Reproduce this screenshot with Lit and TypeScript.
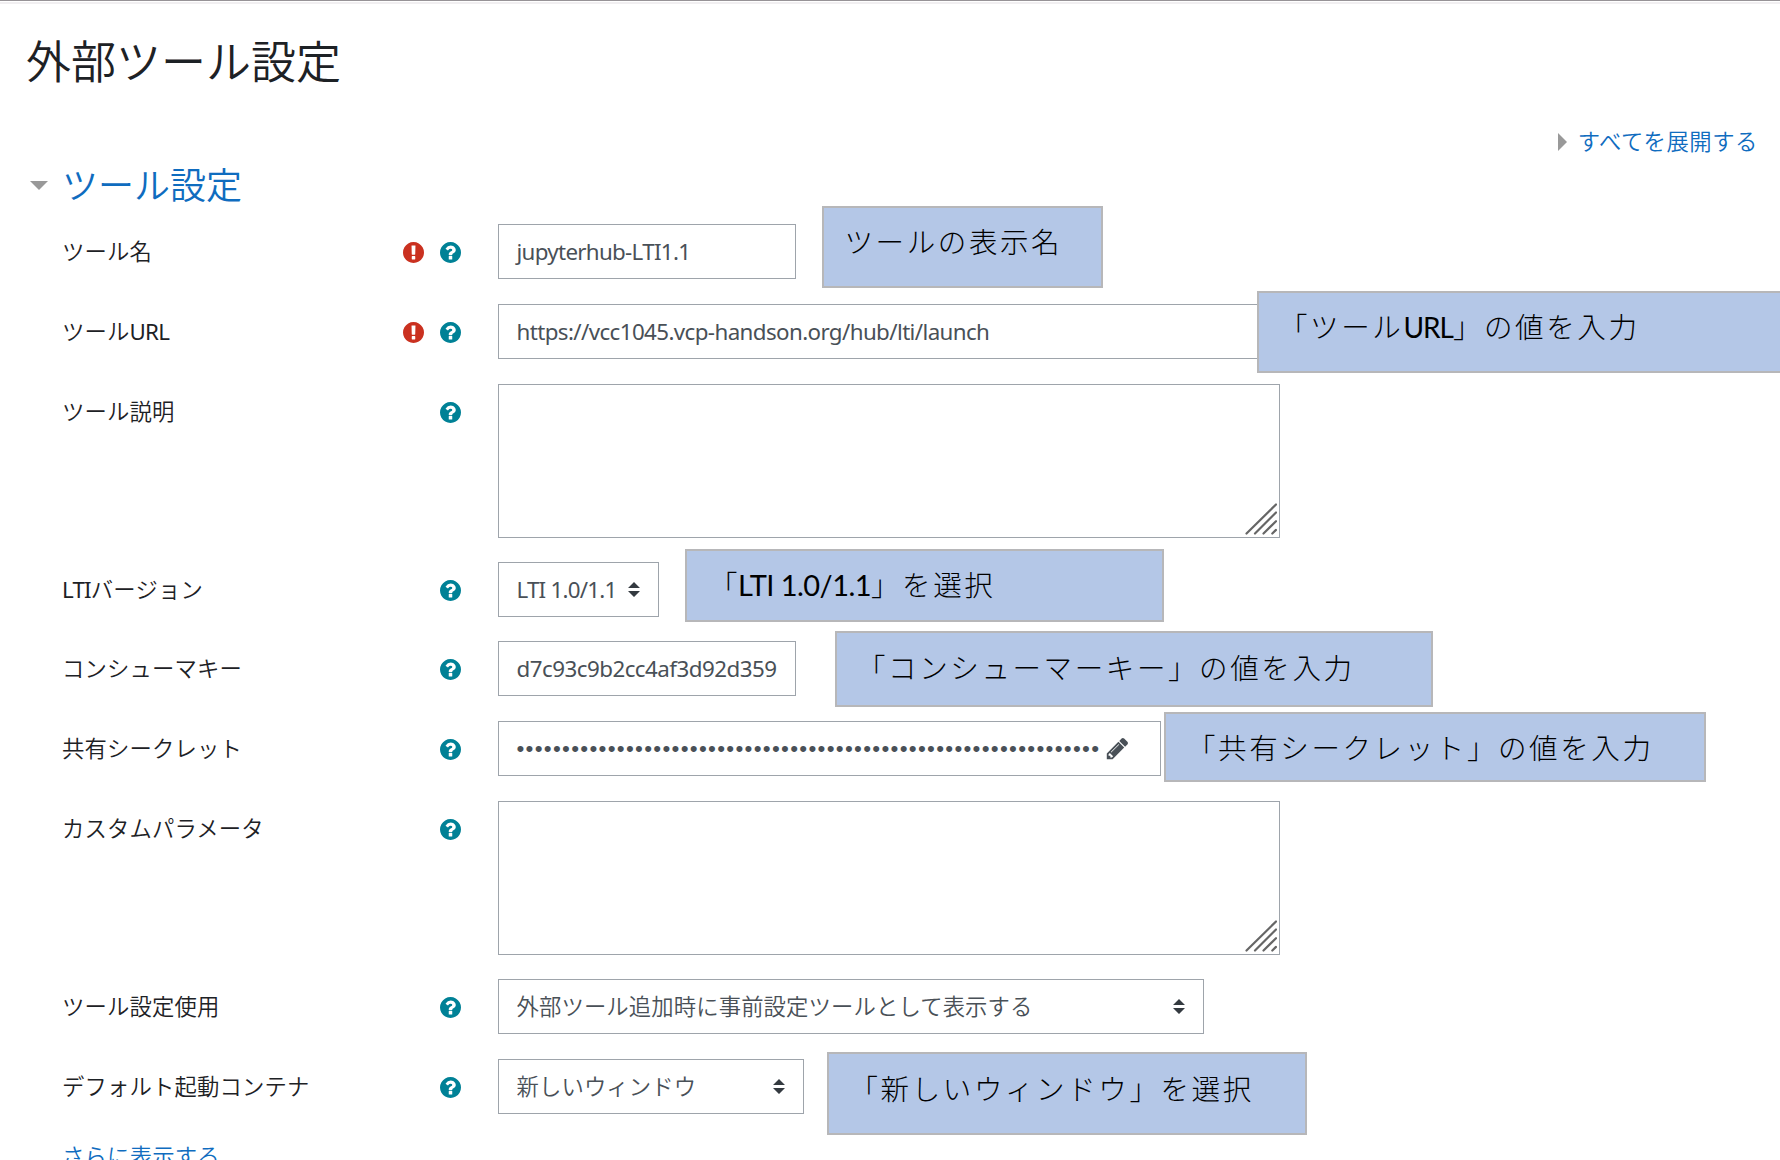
import { LitElement, html, css, svg, nothing } from "lit";
import { customElement, property } from "lit/decorators.js";

const HELP =
  "M896 1248v-192q0-14-9-23t-23-9h-192q-14 0-23 9t-9 23v192q0 14 9 23t23 9h192q14 0 23-9t9-23zm256-672q0-88-55.5-163t-138.5-116-170-41q-243 0-371 213-15 24 8 42l132 100q7 6 19 6 16 0 25-12 53-68 86-92 34-24 86-24 48 0 85.5 26t37.5 59q0 38-20 61t-68 45q-63 28-115.5 86.5t-52.5 125.5v36q0 14 9 23t23 9h192q14 0 23-9t9-23q0-19 21.5-49.5t54.5-49.5q32-18 49-28.5t46-35 44.5-48 28-60.5 12.5-81zm384 192q0 209-103 385.5t-279.5 279.5-385.5 103-385.5-103-279.5-279.5-103-385.5 103-385.5 279.5-279.5 385.5-103 385.5 103 279.5 279.5 103 385.5z";
const REQUIRED =
  "M768 0q209 0 385.5 103t279.5 279.5 103 385.5-103 385.5-279.5 279.5-385.5 103-385.5-103-279.5-279.5-103-385.5 103-385.5 279.5-279.5 385.5-103zm128 1247v-190q0-14-9-23.5t-22-9.5h-192q-13 0-23 10t-10 23v190q0 13 10 23t23 10h192q13 0 22-9.5t9-23.5zm-2-344l18-621q0-12-10-18-10-8-24-8h-220q-14 0-24 8-10 6-10 18l17 621q0 10 10 17.5t24 7.5h185q14 0 23.5-7.5t10.5-17.5z";
const PENCIL =
  "M491 1536l91-91-235-235-91 91v107h128v128h107zm523-928q0-22-22-22-10 0-17 7l-542 542q-7 7-7 17 0 22 22 22 10 0 17-7l542-542q7-7 7-17zm-54-192l416 416-832 832h-416v-416zm683 96q0 53-37 90l-166 166-416-416 166-165q36-38 90-38 53 0 91 38l235 234q37 39 37 91z";

/** One labelled line of the form; the control is slotted. */
@customElement("form-row")
export class FormRow extends LitElement {
  @property() label = "";
  @property({ type: Boolean }) required = false;

  static styles = css`
    :host { display: flex; align-items: flex-start; }
    .head { display: flex; align-items: center; width: 399px; height: 55px; flex: none; }
    .label { flex: 1; white-space: nowrap; color: #1d2125; letter-spacing: 0.16px; }
    .latin { font-weight: 400; letter-spacing: -0.8px; }
    .icons { display: flex; gap: 16px; padding-top: 2px; }
    .icon { display: block; width: 21px; height: 21px; }
    .help { fill: #008196; }
    .req { fill: #ca3120; }
    .body { padding-left: 37px; }
  `;

  render() {
    const parts = this.label.split(/([A-Z]+)/).filter(Boolean);
    return html`
      <div class="head">
        <span class="label">${parts.map((p) => (/[A-Z]/.test(p) ? html`<span class="latin">${p}</span>` : p))}</span>
        <span class="icons">
          ${this.required
            ? html`<svg class="icon req" viewBox="0 0 1536 1536">${svg`<path d=${REQUIRED} />`}</svg>`
            : nothing}
          <svg class="icon help" viewBox="0 0 1536 1536">${svg`<path d=${HELP} />`}</svg>
        </span>
      </div>
      <div class="body"><slot></slot></div>
    `;
  }
}

@customElement("app-root")
export class AppRoot extends LitElement {
  static styles = css`
    :host {
      display: block;
      position: relative;
      box-sizing: border-box;
      width: 1780px;
      height: 1160px;
      overflow: hidden;
      background: #fff;
      color: #1d2125;
      font-family: "Noto Sans", "Noto Sans CJK JP", sans-serif;
      font-size: 22.35px;
      font-weight: 350;
      line-height: 34px;
    }
    .page { display: flex; flex-direction: column; }
    .edge { height: 1px; background: #979397; border-bottom: 1px solid #fff; }
    .edge2 { height: 2px; background: #f1eff1; }
    h2 { margin: 24px 0 0 26px; font-size: 45px; line-height: 68px; font-weight: 350; white-space: nowrap; }
    .expand { display: flex; justify-content: flex-end; align-items: center; gap: 11px; height: 34px; margin-top: 29px; padding-right: 22px; color: #0f6cbf; letter-spacing: 0.55px; }
    .right { width: 0; height: 0; border: 9px solid transparent; border-left: 9.5px solid #999; border-right: 0; }
    .legend { display: flex; align-items: center; gap: 14px; height: 54px; padding-left: 30px; color: #0f6cbf; font-size: 36px; }
    .down { width: 0; height: 0; border: 9px solid transparent; border-top: 9.5px solid #999; border-bottom: 0; margin-bottom: 2px; }
    .form { display: flex; flex-direction: column; padding: 11px 0 0 62px; }
    .r { height: 80px; flex: none; }
    .r.tall { height: 178px; }
    .r.tight { height: 79px; }
    .box { display: flex; align-items: center; box-sizing: border-box; height: 55px; padding: 0 18px 0 17.5px; border: 1px solid #9ea4ab; background: #fff; color: #495057; white-space: nowrap; }
    .clip { overflow: hidden; flex: 1; letter-spacing: 0.12px; }
    .en { font-weight: 400; letter-spacing: -0.6px; }
    .en.name { letter-spacing: -0.69px; }
    .en.ver { letter-spacing: -0.78px; }
    .en.key { letter-spacing: -0.52px; }
    .w-name { width: 298px; }
    .w-url { width: 782px; }
    .w-ver { width: 161px; }
    .w-secret { width: 663px; }
    .w-use { width: 706px; }
    .w-launch { width: 306px; }
    .area { display: flex; justify-content: flex-end; align-items: flex-end; box-sizing: border-box; width: 782px; height: 154px; border: 1px solid #9ea4ab; padding: 0 2px 2px 0; }
    .grip { width: 32px; height: 32px; stroke: #666; stroke-width: 2.2; stroke-linecap: round; }
    .arrows { width: 12px; height: 15px; fill: #343a40; flex: none; }
    .pencil { width: 25px; height: 25px; fill: #495057; flex: none; margin-left: 5px; }
    .dots { font-family: "Liberation Sans", sans-serif; letter-spacing: 1.3px; }
    .more { color: #0f6cbf; line-height: 35px; letter-spacing: 0.2px; }
    .note { position: absolute; display: flex; align-items: flex-start; box-sizing: border-box; border: 2px solid #b7b7b9; background: #b4c7e7; color: #000; font-size: 28.5px; font-weight: 300; line-height: 40px; letter-spacing: 2.6px; white-space: nowrap; font-family: "Noto Sans CJK JP", sans-serif; }
    .lat { font-family: "Lato", sans-serif; font-weight: 400; font-size: 29px; padding-top: 1px; }
    .url { font-size: 28px; letter-spacing: -1px; }
    .ver { letter-spacing: -0.55px; }
    .note .ver { margin-left: -2px; }
    .n1 { left: 822px; top: 206px; width: 281px; height: 82px; padding: 13px 0 0 20.5px; }
    .n2 { left: 1257px; top: 291px; width: 540px; height: 82px; padding: 13px 0 0 20px; }
    .n3 { left: 685px; top: 549px; width: 479px; height: 73px; padding: 13px 0 0 22px; }
    .n4 { left: 835px; top: 631px; width: 598px; height: 76px; padding: 14px 0 0 20px; }
    .n5 { left: 1164px; top: 712px; width: 542px; height: 70px; padding: 13px 0 0 21px; }
    .n6 { left: 827px; top: 1052px; width: 480px; height: 83px; padding: 14px 0 0 20.5px; }
  `;

  private arrows() {
    return html`<svg class="arrows" viewBox="0 0 4 5" preserveAspectRatio="none"><path d="M2 0L0 2h4zm0 5L0 3h4z" /></svg>`;
  }

  private area() {
    return html`<div class="area">
      <svg class="grip" viewBox="0 0 32 32">
        <path d="M1.5 30.5L31 1.5M10 30.5L31 9.5M18.5 30.5L31 18.2M27.3 30.5L31 26.9" />
      </svg>
    </div>`;
  }

  render() {
    return html`
      <div class="page">
        <div class="edge"></div>
        <div class="edge2"></div>
        <h2>外部ツール設定</h2>
        <div class="expand"><span class="right"></span><span>すべてを展開する</span></div>
        <div class="legend"><span class="down"></span><span>ツール設定</span></div>
        <div class="form">
          <form-row class="r" label="ツール名" required>
            <div class="box w-name"><span class="en name">jupyterhub-LTI1.1</span></div>
          </form-row>
          <form-row class="r" label="ツールURL" required>
            <div class="box w-url"><span class="en">https://vcc1045.vcp-handson.org/hub/lti/launch</span></div>
          </form-row>
          <form-row class="r tall" label="ツール説明">${this.area()}</form-row>
          <form-row class="r tight" label="LTIバージョン">
            <div class="box w-ver"><span class="clip en ver">LTI 1.0/1.1</span>${this.arrows()}</div>
          </form-row>
          <form-row class="r" label="コンシューマキー">
            <div class="box w-name"><span class="clip en key">d7c93c9b2cc4af3d92d3598</span></div>
          </form-row>
          <form-row class="r" label="共有シークレット">
            <div class="box w-secret"><span class="dots">${"•".repeat(64)}</span><svg class="pencil" viewBox="0 0 1792 1792">${svg`<path d=${PENCIL} />`}</svg></div>
          </form-row>
          <form-row class="r tall" label="カスタムパラメータ">${this.area()}</form-row>
          <form-row class="r" label="ツール設定使用">
            <div class="box w-use"><span class="clip">外部ツール追加時に事前設定ツールとして表示する</span>${this.arrows()}</div>
          </form-row>
          <form-row class="r" label="デフォルト起動コンテナ">
            <div class="box w-launch"><span class="clip">新しいウィンドウ</span>${this.arrows()}</div>
          </form-row>
          <div class="more">さらに表示する</div>
        </div>
      </div>
      <div class="note n1">ツールの表示名</div>
      <div class="note n2">「ツール<span class="lat url">URL</span>」の値を入力</div>
      <div class="note n3">「<span class="lat ver">LTI 1.0/1.1</span>」を選択</div>
      <div class="note n4">「コンシューマーキー」の値を入力</div>
      <div class="note n5">「共有シークレット」の値を入力</div>
      <div class="note n6">「新しいウィンドウ」を選択</div>
    `;
  }
}
